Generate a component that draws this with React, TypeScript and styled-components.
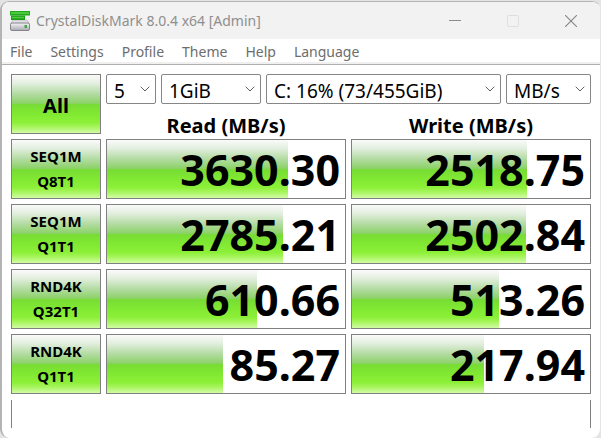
import React from "react";
import styled, { createGlobalStyle } from "styled-components";

const GlobalStyle = createGlobalStyle`
  * { box-sizing: border-box; }
  body { margin: 0; background: #e4e4e4; font-family: "Noto Sans", "Open Sans", sans-serif; color: #000; }
  button, select { font-family: inherit; color: inherit; margin: 0; }
`;

const glass =
  "linear-gradient(to bottom, #fafafa 0%, #e4efe0 14%, #b5dca4 32%, #8cd268 49%, #78dc34 51%, #80e832 66%, #8df038 82%, #a8f560 90%, #d2fca6 100%)";

const Window = styled.div`
  min-height: 100vh;
  padding-top: 1px;
  display: flex;
`;

const Frame = styled.div`
  flex: 1;
  display: flex;
  flex-direction: column;
  background: #fff;
  border: 1px solid #b4b4b4;
  border-right-color: #e4e4e4;
  border-bottom: 0;
  border-left-width: 2px;
  border-radius: 9px;
  overflow: hidden;
`;

const TitleBar = styled.header`
  display: flex;
  align-items: center;
  height: 37px;
  padding-left: 8px;
  background: #f2f2f2;
`;

const Title = styled.h1`
  flex: 1;
  margin: 0 0 0 6px;
  font-size: 14px;
  line-height: 20px;
  font-weight: 400;
  color: #8f8f8f;
  white-space: nowrap;
`;

const WindowButton = styled.button`
  display: flex;
  align-items: center;
  justify-content: center;
  width: 58px;
  height: 37px;
  padding: 0;
  border: 0;
  background: none;
`;

const MenuBar = styled.nav`
  display: flex;
  gap: 18px;
  height: 26px;
  padding-left: 8px;
  border-bottom: 1px solid #b0b0b0;
  box-shadow: inset 0 -2px #f0f0f0;
`;

const MenuItem = styled.button`
  padding: 0;
  border: 0;
  background: none;
  font-size: 14px;
  line-height: 24px;
  color: #6d6d6d;
`;

const Main = styled.main`
  display: grid;
  grid-template-columns: 90px 1fr 1fr;
  gap: 5px;
  padding: 9px 9px 10px 9px;
`;

const GreenButton = styled.button<{ $large?: boolean }>`
  height: 60px;
  padding: ${(p) => (p.$large ? "2px 0 0" : "0")};
  border: 1px solid #808080;
  background: ${glass};
  font-size: ${(p) => (p.$large ? "20px" : "15px")};
  line-height: 25px;
  font-weight: 700;
`;

const Line = styled.span`
  display: block;
`;

const Controls = styled.div`
  grid-column: span 2;
  display: flex;
  flex-direction: column;
  justify-content: space-between;
`;

const SelectRow = styled.div`
  display: grid;
  grid-template-columns: 50px 100px 1fr 85px;
  gap: 5px;
`;

const SelectBox = styled.label`
  display: grid;
  align-items: center;
  height: 30px;
  border: 1px solid #868686;
  border-radius: 2px;
  background: #fff;
`;

const Select = styled.select`
  grid-area: 1 / 1;
  width: 100%;
  height: 28px;
  padding: 4px 20px 0 7px;
  border: 0;
  appearance: none;
  background: none;
  font-size: 19px;
  line-height: 24px;
`;

const Chevron = styled.svg`
  grid-area: 1 / 1;
  justify-self: end;
  margin-right: 5px;
  pointer-events: none;
`;

const Headings = styled.div`
  display: grid;
  grid-template-columns: 1fr 1fr;
  gap: 5px;
`;

const Heading = styled.h2`
  margin: 0;
  font-size: 20px;
  line-height: 20px;
  font-weight: 700;
  text-align: center;
  height: 18px;
`;

const Meter = styled.div`
  display: grid;
  height: 60px;
  border: 1px solid #808080;
`;

const Fill = styled.div`
  grid-area: 1 / 1;
  background: ${glass};
`;

const Score = styled.output`
  grid-area: 1 / 1;
  padding: 2px 5px 0 0;
  font-size: 43px;
  line-height: 56px;
  font-weight: 700;
  text-align: right;
`;

const Comment = styled.div`
  height: 28px;
  margin: -4px 9px 9px;
  border: solid #808080;
  border-width: 0 1px;
`;

const options = [
  { label: "Test count", value: "5" },
  { label: "Test size", value: "1GiB" },
  { label: "Drive", value: "C: 16% (73/455GiB)" },
  { label: "Unit", value: "MB/s" },
];

const tests = [
  { name: "SEQ1M", queue: "Q8T1", read: ["3630.30", 76], write: ["2518.75", 73.6] },
  { name: "SEQ1M", queue: "Q1T1", read: ["2785.21", 74], write: ["2502.84", 73.1] },
  { name: "RND4K", queue: "Q32T1", read: ["610.66", 63.1], write: ["513.26", 61.8] },
  { name: "RND4K", queue: "Q1T1", read: ["85.27", 48.8], write: ["217.94", 55.5] },
] as { name: string; queue: string; read: [string, number]; write: [string, number] }[];

const DiskIcon = () => (
  <svg width="20" height="20" viewBox="0 0 20 20" aria-hidden="true">
    <defs>
      <linearGradient id="disk" x1="0" y1="0" x2="0" y2="1">
        <stop offset="0" stopColor="#f4f4f8" />
        <stop offset="1" stopColor="#a9a9b2" />
      </linearGradient>
    </defs>
    <path d="M3 9h14l2.5 4.5h-19z" fill="#e0e0e6" stroke="#aaaab0" strokeWidth=".6" />
    <rect x=".5" y="12" width="19" height="7.5" rx="1.5" fill="url(#disk)" stroke="#85858b" />
    <rect x="14.5" y="14" width="2.5" height="3" fill="#42a544" />
    <path d="M0 0h20v4.5H0z" fill="#23a81e" />
    <path d="M1 2h18" stroke="#5ad448" strokeWidth="1.5" />
    <path d="M1 4.5h14V9H1z" fill="#1c9f18" />
    <path d="M2 6.500h12" stroke="#4fca3e" strokeWidth="1.5" />
  </svg>
);

function Result({ label, data }: { label: string; data: [string, number] }) {
  return (
    <Meter>
      <Fill style={{ width: `${data[1]}%` }} />
      <Score aria-label={label}>{data[0]}</Score>
    </Meter>
  );
}

export default function App() {
  return (
    <Window>
      <GlobalStyle />
      <Frame>
        <TitleBar>
          <DiskIcon />
          <Title>CrystalDiskMark 8.0.4 x64 [Admin]</Title>
          <WindowButton aria-label="Minimize">
            <svg width="12" height="12"><path d="M0 5.5h12" stroke="#8c8c8c" /></svg>
          </WindowButton>
          <WindowButton aria-label="Maximize" disabled>
            <svg width="12" height="12"><rect x=".5" y=".5" width="11" height="11" rx="1" fill="none" stroke="#dedede" /></svg>
          </WindowButton>
          <WindowButton aria-label="Close">
            <svg width="12" height="12"><path d="M0 0l12 12M12 0L0 12" stroke="#858585" strokeWidth="1.1" /></svg>
          </WindowButton>
        </TitleBar>
        <MenuBar>
          {["File", "Settings", "Profile", "Theme", "Help", "Language"].map((m) => (
            <MenuItem key={m}>{m}</MenuItem>
          ))}
        </MenuBar>
        <Main>
          <GreenButton $large>All</GreenButton>
          <Controls>
            <SelectRow>
              {options.map((o) => (
                <SelectBox key={o.label}>
                  <Select aria-label={o.label} defaultValue={o.value}>
                    <option>{o.value}</option>
                  </Select>
                  <Chevron width="10" height="6" viewBox="0 0 10 6">
                    <path d="M.7.7L5 5 9.3.7" fill="none" stroke="#606060" />
                  </Chevron>
                </SelectBox>
              ))}
            </SelectRow>
            <Headings>
              <Heading>Read (MB/s)</Heading>
              <Heading>Write (MB/s)</Heading>
            </Headings>
          </Controls>
          {tests.map((t) => (
            <React.Fragment key={t.name + t.queue}>
              <GreenButton>
                <Line>{t.name}</Line>
                <Line>{t.queue}</Line>
              </GreenButton>
              <Result label={`${t.name} ${t.queue} read`} data={t.read} />
              <Result label={`${t.name} ${t.queue} write`} data={t.write} />
            </React.Fragment>
          ))}
        </Main>
        <Comment />
      </Frame>
    </Window>
  );
}
